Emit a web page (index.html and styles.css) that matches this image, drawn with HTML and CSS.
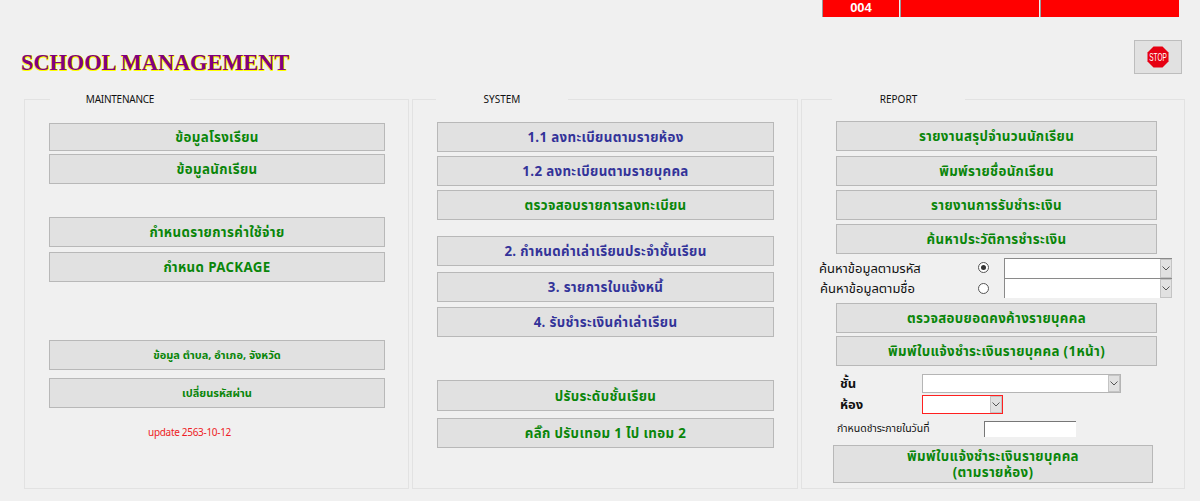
FILE: index.html
```html
<!DOCTYPE html>
<html lang="th">
<head>
<meta charset="utf-8">
<title>School Management</title>
<link rel="stylesheet" href="styles.css">
</head>
<body>
<div class="topbar">
  <div class="cell cell-code">004</div>
  <div class="cell cell-wide"></div>
  <div class="cell cell-wide"></div>
</div>
<header class="header">
  <h1 class="title">SCHOOL MANAGEMENT</h1>
  <button class="stop" type="button" aria-label="Stop">
    <svg width="22" height="22" viewBox="0 0 22 22">
      <polygon points="6.5,0.5 15.5,0.5 21.5,6.5 21.5,15.5 15.5,21.5 6.5,21.5 0.5,15.5 0.5,6.5" fill="#e60012"/>
      <text class="stop-text" transform="translate(11 15) scale(0.62 1)" text-anchor="middle">STOP</text>
    </svg>
  </button>
</header>
<main class="panels">
  <fieldset class="panel panel-a">
    <legend>MAINTENANCE</legend>
    <div class="group g-3">
      <button class="btn green short" type="button">ข้อมูลโรงเรียน</button>
      <button class="btn green" type="button">ข้อมูลนักเรียน</button>
    </div>
    <div class="group g-5 mt-33">
      <button class="btn green" type="button">กำหนดรายการค่าใช้จ่าย</button>
      <button class="btn green" type="button">กำหนด PACKAGE</button>
    </div>
    <div class="group g-8 mt-58">
      <button class="btn green small" type="button">ข้อมูล ตำบล, อำเภอ, จังหวัด</button>
      <button class="btn green small" type="button">เปลี่ยนรหัสผ่าน</button>
    </div>
    <p class="update">update 2563-10-12</p>
  </fieldset>

  <fieldset class="panel panel-b">
    <legend>SYSTEM</legend>
    <div class="group g-4">
      <button class="btn blue" type="button">1.1 ลงทะเบียนตามรายห้อง</button>
      <button class="btn blue" type="button">1.2 ลงทะเบียนตามรายบุคคล</button>
      <button class="btn green" type="button">ตรวจสอบรายการลงทะเบียน</button>
    </div>
    <div class="group g-55 mt-16">
      <button class="btn blue" type="button">2. กำหนดค่าเล่าเรียนประจำชั้นเรียน</button>
      <button class="btn blue" type="button">3. รายการใบแจ้งหนี้</button>
      <button class="btn blue" type="button">4. รับชำระเงินค่าเล่าเรียน</button>
    </div>
    <div class="group g-7 mt-43">
      <button class="btn green tall" type="button">ปรับระดับชั้นเรียน</button>
      <button class="btn green" type="button">คลิ๊ก ปรับเทอม 1 ไป เทอม 2</button>
    </div>
  </fieldset>

  <fieldset class="panel panel-c">
    <legend>REPORT</legend>
    <div class="group g-44">
      <button class="btn green" type="button">รายงานสรุปจำนวนนักเรียน</button>
      <button class="btn green" type="button">พิมพ์รายชื่อนักเรียน</button>
      <button class="btn green" type="button">รายงานการรับชำระเงิน</button>
      <button class="btn green" type="button">ค้นหาประวัติการชำระเงิน</button>
    </div>
    <div class="search">
      <div class="search-row">
        <span class="search-label">ค้นหาข้อมูลตามรหัส</span>
        <span class="radio radio-on"></span>
        <div class="combo combo-sunken"><span class="arrow"><svg width="8" height="5" viewBox="0 0 8 5"><path d="M0.5 0.5 4 4 7.5 0.5" fill="none" stroke="#555"/></svg></span></div>
      </div>
      <div class="search-row">
        <span class="search-label label-indent">ค้นหาข้อมูลตามชื่อ</span>
        <span class="radio"></span>
        <div class="combo combo-sunken"><span class="arrow"><svg width="8" height="5" viewBox="0 0 8 5"><path d="M0.5 0.5 4 4 7.5 0.5" fill="none" stroke="#555"/></svg></span></div>
      </div>
    </div>
    <div class="group g-3 mt-5">
      <button class="btn green" type="button">ตรวจสอบยอดคงค้างรายบุคคล</button>
      <button class="btn green" type="button">พิมพ์ใบแจ้งชำระเงินรายบุคคล (1หน้า)</button>
    </div>
    <div class="class-row">
      <span class="class-label">ชั้น</span>
      <div class="combo combo-class"><span class="arrow"><svg width="8" height="5" viewBox="0 0 8 5"><path d="M0.5 0.5 4 4 7.5 0.5" fill="none" stroke="#555"/></svg></span></div>
    </div>
    <div class="class-row room-row">
      <span class="class-label">ห้อง</span>
      <div class="combo combo-room"><span class="arrow"><svg width="8" height="5" viewBox="0 0 8 5"><path d="M0.5 0.5 4 4 7.5 0.5" fill="none" stroke="#555"/></svg></span></div>
    </div>
    <div class="date-row">
      <span class="date-label">กำหนดชำระภายในวันที่</span>
      <div class="date-input"></div>
    </div>
    <button class="btn green print" type="button">พิมพ์ใบแจ้งชำระเงินรายบุคคล<br>(ตามรายห้อง)</button>
  </fieldset>
</main>
</body>
</html>
```
FILE: styles.css
```css
* { box-sizing: border-box; }
html, body { margin: 0; padding: 0; }
body {
  width: 1200px;
  height: 501px;
  overflow: hidden;
  background: #f0f0f0;
  font-family: "Liberation Sans", "Noto Sans", "DejaVu Sans", sans-serif;
}
.topbar {
  display: flex;
  justify-content: flex-end;
  gap: 1px;
  height: 18px;
  padding-right: 21px;
}
.cell {
  height: 17px;
  background: #ff0000;
  color: #fff;
  font-weight: bold;
  font-size: 13px;
  line-height: 15px;
  text-align: center;
  border-left: 1px solid #9a9a9a;
}
.cell-code { width: 77px; }
.cell-wide { width: 139px; }
.header {
  display: flex;
  justify-content: space-between;
  align-items: flex-start;
  height: 73px;
  padding: 22px 18px 0 21px;
}
.title {
  margin: 9px 0 0;
  font-family: "Liberation Serif", serif;
  font-size: 22.3px;
  line-height: 28px;
  font-weight: bold;
  color: #800080;
  text-shadow: 1px 1px 0 #ffff00, 1px 0 0 #ffff00, 0 1px 0 #ffff00;
}
.stop {
  display: flex;
  align-items: center;
  justify-content: center;
  width: 48px;
  height: 34px;
  padding: 0;
  background: #e1e1e1;
  border: 1px solid #bdbdbd;
}
.stop-text {
  font-family: "Liberation Sans", sans-serif;
  font-size: 10.5px;
  fill: #fff;
}
.panels {
  display: flex;
  gap: 3px;
  padding-left: 24px;
}
.panel {
  height: 398px;
  margin: 0;
  padding: 16px 0 0;
  border: 1px solid #e2e2e2;
  min-width: 0;
}
.panel legend {
  display: flex;
  justify-content: center;
  height: 16px;
  padding: 0;
  font-family: "Noto Sans", sans-serif;
  font-size: 10px;
  line-height: 16px;
  color: #111;
}
.panel-a { width: 385px; padding-left: 24px; padding-right: 23px; }
.panel-a legend { width: 140px; margin-left: 1px; letter-spacing: -0.25px; }
.panel-b { width: 386px; padding-left: 24px; padding-right: 23px; padding-top: 15px; }
.panel-b legend { width: 132px; margin-left: -1px; }
.panel-c { width: 384px; padding-left: 34px; padding-right: 27px; padding-top: 14.2px; }
.panel-c legend { width: 133px; margin-left: -4px; }
.group { display: flex; flex-direction: column; }
.g-3 { gap: 3px; }
.g-4 { gap: 4px; }
.g-44 { gap: 4.4px; }
.g-5 { gap: 5px; }
.g-55 { gap: 5.5px; }
.g-7 { gap: 7px; }
.g-8 { gap: 8px; }
.mt-5 { margin-top: 5px; }
.mt-16 { margin-top: 16px; }
.mt-33 { margin-top: 33px; }
.mt-43 { margin-top: 43px; }
.mt-58 { margin-top: 58px; }
.btn {
  display: block;
  width: 100%;
  height: 30px;
  padding: 2px 0 0;
  background: #e1e1e1;
  border: 1px solid #b8b8b8;
  font-family: "Noto Sans Thai", "Noto Sans", "DejaVu Sans", sans-serif;
  font-size: 13.3px;
  line-height: 16px;
  font-weight: bold;
  letter-spacing: 0.35px;
}
.green { color: #0a860a; }
.blue { color: #333399; }
.short { height: 28px; }
.tall { height: 31px; }
.small { font-size: 11px; letter-spacing: 0; }
.update {
  margin: 17px 0 0 99px;
  font-family: "Noto Sans", sans-serif;
  font-size: 10px;
  line-height: 14px;
  letter-spacing: -0.3px;
  color: #ee1c25;
}
.search { margin: 3px -14px 0 -17px; }
.search-row {
  display: flex;
  align-items: center;
  height: 20.5px;
}
.search-label {
  width: 159px;
  flex-shrink: 0;
  padding-top: 2px;
  font-family: "Noto Sans Thai", "Noto Sans", sans-serif;
  font-size: 13px;
  line-height: 18px;
  color: #111;
}
.label-indent { padding-left: 1px; }
.radio {
  position: relative;
  flex-shrink: 0;
  width: 11px;
  height: 11px;
  margin-right: 15px;
  border: 1px solid #555;
  border-radius: 50%;
  background: #fff;
}
.radio-on::after {
  content: "";
  position: absolute;
  inset: 2px;
  border-radius: 50%;
  background: #333;
}
.combo {
  display: flex;
  flex-shrink: 0;
  justify-content: flex-end;
  background: #fff;
}
.combo-sunken {
  width: 168px;
  height: 20px;
  border-top: 1px solid #8a8a8a;
  border-left: 1px solid #8a8a8a;
}
.arrow {
  display: flex;
  align-items: center;
  justify-content: center;
  width: 12px;
  background: #e1e1e1;
  border: 1px solid #c4c4c4;
}
.class-row {
  display: flex;
  align-items: center;
  height: 19px;
  margin-top: 8px;
  margin-left: 4px;
}
.room-row { margin-top: 2px; }
.class-label {
  width: 82px;
  font-family: "Noto Sans Thai", "Noto Sans", sans-serif;
  font-size: 13px;
  font-weight: bold;
  color: #111;
}
.combo-class {
  width: 199px;
  height: 19px;
  border: 1px solid #b5b5b5;
}
.combo-room {
  width: 81px;
  height: 19px;
  border: 1px solid #ff2020;
}
.date-row {
  display: flex;
  align-items: center;
  height: 16px;
  margin-top: 7px;
  margin-left: 1px;
}
.date-label {
  width: 147px;
  padding-top: 1px;
  font-family: "Noto Sans Thai", "Noto Sans", sans-serif;
  font-size: 10.5px;
  line-height: 15px;
  color: #111;
}
.date-input {
  width: 92px;
  height: 16px;
  background: #fff;
  border-top: 1px solid #777;
  border-left: 1px solid #777;
}
.print {
  width: 320px;
  height: 38px;
  margin: 8px 0 0 -3px;
  padding-top: 2px;
}
```
